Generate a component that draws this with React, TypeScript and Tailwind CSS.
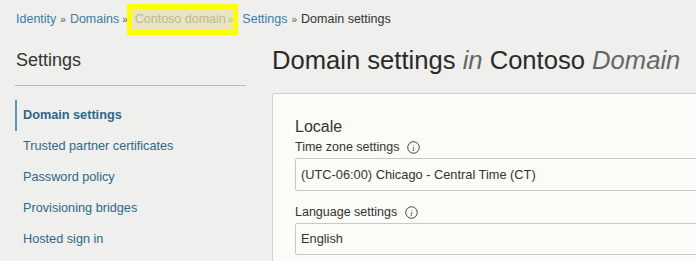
import React from 'react';

function InfoIcon() {
  return (
    <svg width="13" height="13" viewBox="0 0 14 14" className="ml-2 inline-block">
      <circle cx="7" cy="7" r="6.2" fill="none" stroke="#333" strokeWidth="1" />
      <text x="7" y="10.4" textAnchor="middle" fontSize="9" fontStyle="italic" fontFamily="Liberation Serif, serif" fill="#333">i</text>
    </svg>
  );
}

const navItems = [
  'Domain settings',
  'Trusted partner certificates',
  'Password policy',
  'Provisioning bridges',
  'Hosted sign in',
];

export default function App() {
  return (
    <div
      className="w-[696px] h-[261px] overflow-hidden bg-[#efefed] text-[#333]"
      style={{ fontFamily: '"Liberation Sans", Arial, sans-serif' }}
    >
      {/* Breadcrumb */}
      <div className="flex items-center h-[38px] pl-[16px] text-[12.5px]">
        <a className="text-[#3d7da3]">Identity</a>
        <span className="mx-[4px] text-[10px] text-[#555]">»</span>
        <a className="text-[#3d7da3]">Domains</a>
        <span className="ml-[3px] text-[10px] text-[#555]">»</span>
        <span className="ml-[-1px] mr-[4px] border-[5px] border-[#ffff00] bg-[#ebe4c0] text-[#bdb79c] h-[31px] flex items-center pl-[3px] whitespace-nowrap">
          Contoso domain <span className="ml-[2px] text-[10px]">»</span>
        </span>
        <a className="text-[#3d7da3]">Settings</a>
        <span className="mx-[4px] text-[10px] text-[#555]">»</span>
        <span className="text-[#333]">Domain settings</span>
      </div>

      <div className="flex">
        {/* Sidebar */}
        <div className="w-[231px] ml-[15px] shrink-0">
          <div className="text-[18px] text-[#333] pt-[11px] pb-[14px] pl-[1px] leading-[22px]">Settings</div>
          <div className="border-t border-[#b8b8b8]" />
          <nav className="mt-[14px]">
            {navItems.map((item, i) => (
              <div
                key={item}
                className={
                  'h-[31px] flex items-center pl-[6px] text-[12.7px] border-l-2 ' +
                  (i === 0 ? 'border-[#5a97bd] font-bold text-[#2e6789]' : 'border-transparent text-[#2e6789]')
                }
              >
                {item}
              </div>
            ))}
          </nav>
        </div>

        {/* Main */}
        <div className="ml-[26px] flex-1 min-w-0">
          <h1 className="text-[25.6px] leading-[30px] text-[#2a2a2a] pt-[7px] whitespace-nowrap">
            Domain settings <i className="text-[#666]">in</i> Contoso <i className="text-[#666]">Domain</i>
          </h1>
          <div className="mt-[18px] w-[600px] h-[200px] bg-[#fbfbf7] border border-[#d2d2cf] rounded-[2px] pl-[22px] pt-[24px]">
            <div className="text-[16px] leading-[18px] text-[#333]">Locale</div>
            <div className="flex items-center text-[12.5px] leading-[16px] mt-[3px] text-[#333]">
              Time zone settings <InfoIcon />
            </div>
            <div className="mt-[3px] h-[33px] border border-[#c8c8c4] rounded-[2px] flex items-center pl-[5px] text-[12.8px] text-[#333]">
              (UTC-06:00) Chicago - Central Time (CT)
            </div>
            <div className="flex items-center text-[12.5px] leading-[16px] mt-[13px] text-[#333]">
              Language settings <InfoIcon />
            </div>
            <div className="mt-[3px] h-[32px] border border-[#c8c8c4] rounded-[2px] flex items-center pl-[5px] text-[12.8px] text-[#333]">
              English
            </div>
          </div>
        </div>
      </div>
    </div>
  );
}
